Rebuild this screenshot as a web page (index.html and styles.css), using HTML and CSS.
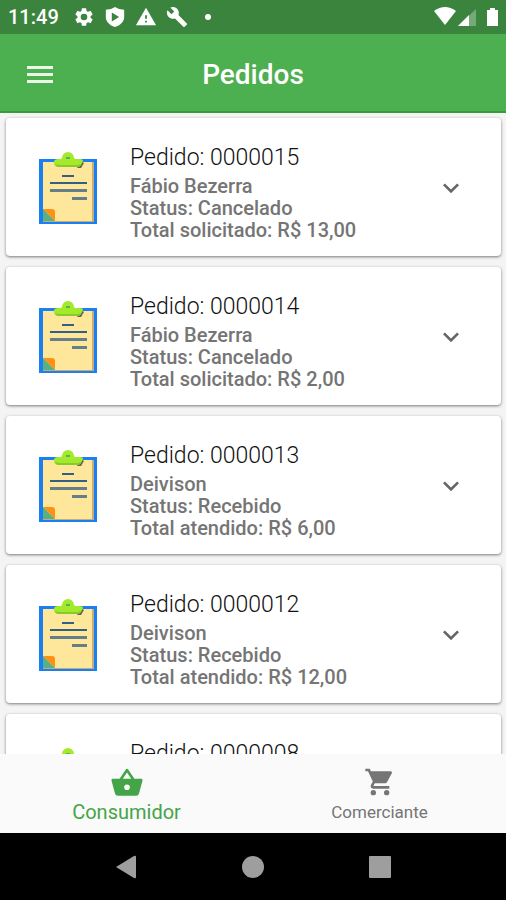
FILE: index.html
```
<!DOCTYPE html>
<html lang="pt-BR">
<head>
<meta charset="utf-8">
<meta name="viewport" content="width=device-width, initial-scale=1">
<title>Pedidos</title>
<link rel="stylesheet" href="styles.css">
</head>
<body>
<svg class="defs" aria-hidden="true">
  <symbol id="clipboard" viewBox="0 0 60 72">
    <path fill="#1a80f2" d="M1 7h58v65H1z"/>
    <path fill="#c9ab78" d="M5 10h51v60H5z"/>
    <path fill="#fee79b" d="M5 10h49v59H5z"/>
    <path fill="#5c6b45" d="M43 9l3 2-3 5h-4z"/>
    <path fill="#a5e92c" d="M24 6a6 6 0 0 1 12 0l1 1h5q3 0 3 2l-2 4q-1 2-4 2H20q-3 0-4-3v-3q1-2 4-2h3z"/>
    <path fill="#86cb2b" d="M17 12q3 1 6 1h17l3-1q-1 3-4 3H20q-2 0-3-3z"/>
    <path fill="#4aba52" d="M28 5h4v2h-4z"/>
    <path fill="#315f86" d="M24 23h12v2H24zM12 30h37v2H12z"/>
    <path fill="#647f8a" d="M12 37h37v3H12zM34 45h15v3H34z"/>
    <path fill="#ff9012" d="M5 57h9q3 0 3 3v9z"/>
    <path fill="#58b184" d="M5 57l12 12H5z"/>
  </symbol>
  <symbol id="chevron" viewBox="0 0 24 24">
    <path d="M16.59 8.59L12 13.17 7.41 8.59 6 10l6 6 6-6z"/>
  </symbol>
</svg>

<div class="status">
  <span class="time">11:49</span>
  <svg class="status-icon" viewBox="0 0 24 24" aria-hidden="true"><path d="M19.14 12.94c.04-.3.06-.61.06-.94s-.02-.64-.07-.94l2.03-1.58a.49.49 0 0 0 .12-.61l-1.92-3.32a.49.49 0 0 0-.59-.22l-2.39.96a7 7 0 0 0-1.62-.94l-.36-2.54a.48.48 0 0 0-.48-.41h-3.84a.48.48 0 0 0-.47.41l-.36 2.54a7 7 0 0 0-1.62.94l-2.39-.96a.48.48 0 0 0-.59.22L2.74 8.87a.48.48 0 0 0 .12.61l2.03 1.58a6 6 0 0 0 0 1.88l-2.03 1.58a.49.49 0 0 0-.12.61l1.92 3.32c.12.22.37.29.59.22l2.39-.96c.5.38 1.03.7 1.62.94l.36 2.54c.05.24.24.41.48.41h3.84c.24 0 .44-.17.47-.41l.36-2.54a7 7 0 0 0 1.62-.94l2.39.96c.22.08.47 0 .59-.22l1.92-3.32a.48.48 0 0 0-.12-.61zM12 15.6a3.6 3.6 0 1 1 0-7.2 3.6 3.6 0 0 1 0 7.2z"/></svg>
  <svg class="status-icon" viewBox="0 0 24 24" aria-hidden="true"><path fill-rule="evenodd" d="M12 1Q8 4 2 4v8c0 5 4 9 10 11 6-2 10-6 10-11V4Q16 4 12 1zM8.500 7v10l8-5z"/></svg>
  <svg class="status-icon" viewBox="0 0 24 24" aria-hidden="true"><path d="M1 21h22L12 2zm12-3h-2v-2h2zm0-4h-2v-4h2z"/></svg>
  <svg class="status-icon" viewBox="0 0 24 24" aria-hidden="true"><path d="M22.700 19l-9.100-9.100c.9-2.300.4-5-1.500-6.900-2-2-5-2.400-7.400-1.300L9 6 6 9 1.600 4.700C.4 7.100.9 10.100 2.900 12.100c1.900 1.900 4.600 2.400 6.900 1.500l9.100 9.100c.4.4 1 .4 1.400 0l2.300-2.300c.5-.4.5-1.100.1-1.400z"/></svg>
  <span class="dot"></span>
  <svg class="signals" viewBox="0 0 64 20" aria-hidden="true">
    <path d="M0 4q11-8 22 0L11 18z"/>
    <path opacity=".3" d="M24 19h18V2z"/>
    <path d="M24 19h11V8z"/>
    <path d="M56 1h5v2h3v16H53V3h3z"/>
  </svg>
</div>

<header class="appbar">
  <button class="menu" type="button" aria-label="Menu"><svg viewBox="0 0 26 18"><path d="M0 0h26v3H0zM0 7h26v3H0zM0 14h26v3H0z"/></svg></button>
  <h1 class="title">Pedidos</h1>
</header>

<main class="orders">
  <article class="card">
    <svg class="clip" aria-hidden="true"><use href="#clipboard"/></svg>
    <div class="info">
      <h2 class="number">Pedido: 0000015</h2>
      <p>Fábio Bezerra</p><p>Status: Cancelado</p><p>Total solicitado: R$ 13,00</p>
    </div>
    <button class="expand" type="button" aria-label="Expandir"><svg><use href="#chevron"/></svg></button>
  </article>
  <article class="card">
    <svg class="clip" aria-hidden="true"><use href="#clipboard"/></svg>
    <div class="info">
      <h2 class="number">Pedido: 0000014</h2>
      <p>Fábio Bezerra</p><p>Status: Cancelado</p><p>Total solicitado: R$ 2,00</p>
    </div>
    <button class="expand" type="button" aria-label="Expandir"><svg><use href="#chevron"/></svg></button>
  </article>
  <article class="card">
    <svg class="clip" aria-hidden="true"><use href="#clipboard"/></svg>
    <div class="info">
      <h2 class="number">Pedido: 0000013</h2>
      <p>Deivison</p><p>Status: Recebido</p><p>Total atendido: R$ 6,00</p>
    </div>
    <button class="expand" type="button" aria-label="Expandir"><svg><use href="#chevron"/></svg></button>
  </article>
  <article class="card">
    <svg class="clip" aria-hidden="true"><use href="#clipboard"/></svg>
    <div class="info">
      <h2 class="number">Pedido: 0000012</h2>
      <p>Deivison</p><p>Status: Recebido</p><p>Total atendido: R$ 12,00</p>
    </div>
    <button class="expand" type="button" aria-label="Expandir"><svg><use href="#chevron"/></svg></button>
  </article>
  <article class="card">
    <svg class="clip" aria-hidden="true"><use href="#clipboard"/></svg>
    <div class="info">
      <h2 class="number">Pedido: 0000008</h2>
    </div>
  </article>
</main>

<nav class="tabs">
  <a class="tab active" href="#consumidor">
    <svg viewBox="0 0 24 24" aria-hidden="true"><path d="M17.210 9l-4.380-6.560a.99.99 0 0 0-1.660 0L6.790 9H2c-.55 0-1 .45-1 1l.04.27 2.540 9.270A2 2 0 0 0 5.500 21h13a2 2 0 0 0 1.930-1.460l2.540-9.270L23 10c0-.55-.45-1-1-1zM9 9l3-4.400L15 9zm3 8a2 2 0 1 1 0-4 2 2 0 0 1 0 4z"/></svg>
    <span>Consumidor</span>
  </a>
  <a class="tab" href="#comerciante">
    <svg viewBox="0 0 24 24" aria-hidden="true"><path d="M7 18a2 2 0 1 0 0 4 2 2 0 0 0 0-4zM1 2v2h2l3.600 7.590-1.350 2.450C4.520 15.370 5.480 17 7 17h12v-2H7.420a.25.25 0 0 1-.25-.25l.03-.12.9-1.630h7.450c.75 0 1.410-.41 1.750-1.030l3.580-6.490A1 1 0 0 0 20 4H5.210l-.94-2zm16 16a2 2 0 1 0 0 4 2 2 0 0 0 0-4z"/></svg>
    <span>Comerciante</span>
  </a>
</nav>

<div class="system">
  <button type="button" aria-label="Voltar"><svg viewBox="0 0 24 24"><path d="M2 12L20 1q2-1 2 1v20q0 2-2 1z"/></svg></button>
  <button type="button" aria-label="Início"><svg viewBox="0 0 24 24"><circle cx="12" cy="12" r="11"/></svg></button>
  <button type="button" aria-label="Recentes"><svg viewBox="0 0 24 24"><rect x="1" y="1" width="22" height="22" rx="1"/></svg></button>
</div>
</body>
</html>
```
FILE: styles.css
```
* { box-sizing: border-box; }
body {
  margin: 0;
  height: 100vh;
  display: flex;
  flex-direction: column;
  font-family: Roboto, "Liberation Sans", sans-serif;
  background: #f4f4f4;
}
h1, h2, p { margin: 0; }
button { padding: 0; border: 0; background: none; color: inherit; display: grid; place-items: center; }
svg { fill: currentColor; display: block; }
.defs { position: absolute; width: 0; height: 0; }

.status {
  flex: none;
  height: 34px;
  padding: 0 8px;
  display: flex;
  align-items: center;
  gap: 9px;
  background: #3b843e;
  color: #fff;
}
.time { font-size: 20px; font-weight: 500; margin-right: 5px; }
.status-icon { width: 22px; height: 22px; }
.dot { width: 6px; height: 6px; margin-left: 8px; border-radius: 50%; background: #fff; }
.signals { width: 64px; height: 20px; margin-left: auto; }

.appbar {
  flex: none;
  height: 79px;
  padding: 4px 24px 0;
  display: grid;
  grid-template-columns: 32px 1fr 32px;
  align-items: center;
  background: #4caf50;
  border-bottom: 2px solid #33a037;
  color: #fff;
}
.menu { width: 32px; height: 40px; color: #e9f6e9; }
.menu svg { width: 26px; height: 18px; }
.title { text-align: center; font-size: 28px; font-weight: 500; line-height: 32px; }

.orders {
  flex: 1;
  min-height: 0;
  overflow: hidden;
  padding: 5px 5px 0 6px;
  display: flex;
  flex-direction: column;
  gap: 11px;
}
.card {
  flex: none;
  height: 138px;
  padding: 26px 36px 0 32px;
  display: flex;
  align-items: flex-start;
  background: #fff;
  border-radius: 4px;
  box-shadow: 0 1px 3px rgba(0, 0, 0, .5);
}
.clip { flex: none; width: 60px; height: 72px; margin-top: 8px; }
.info { flex: 1; margin-left: 32px; color: #757575; font-size: 20px; font-weight: 500; line-height: 22px; }
.number { margin-bottom: 3px; color: #111; font-size: 23px; font-weight: 300; line-height: 28px; }
.expand { width: 30px; height: 88px; color: #666; }
.expand svg { width: 32px; height: 32px; }

.tabs { flex: none; height: 79px; display: flex; background: #fafafa; }
.tab {
  flex: 1;
  padding-top: 12px;
  display: flex;
  flex-direction: column;
  align-items: center;
  gap: 2px;
  color: #757575;
  font-size: 17px;
  line-height: 24px;
  text-decoration: none;
}
.tab svg { width: 32px; height: 32px; }
.active { gap: 0; color: #43a547; font-size: 20px; }
.active svg { width: 34px; height: 34px; }

.system {
  flex: none;
  height: 67px;
  padding: 0 63px;
  display: flex;
  align-items: center;
  justify-content: space-around;
  background: #000;
  color: #9e9e9e;
}
.system svg { width: 24px; height: 24px; }
```
